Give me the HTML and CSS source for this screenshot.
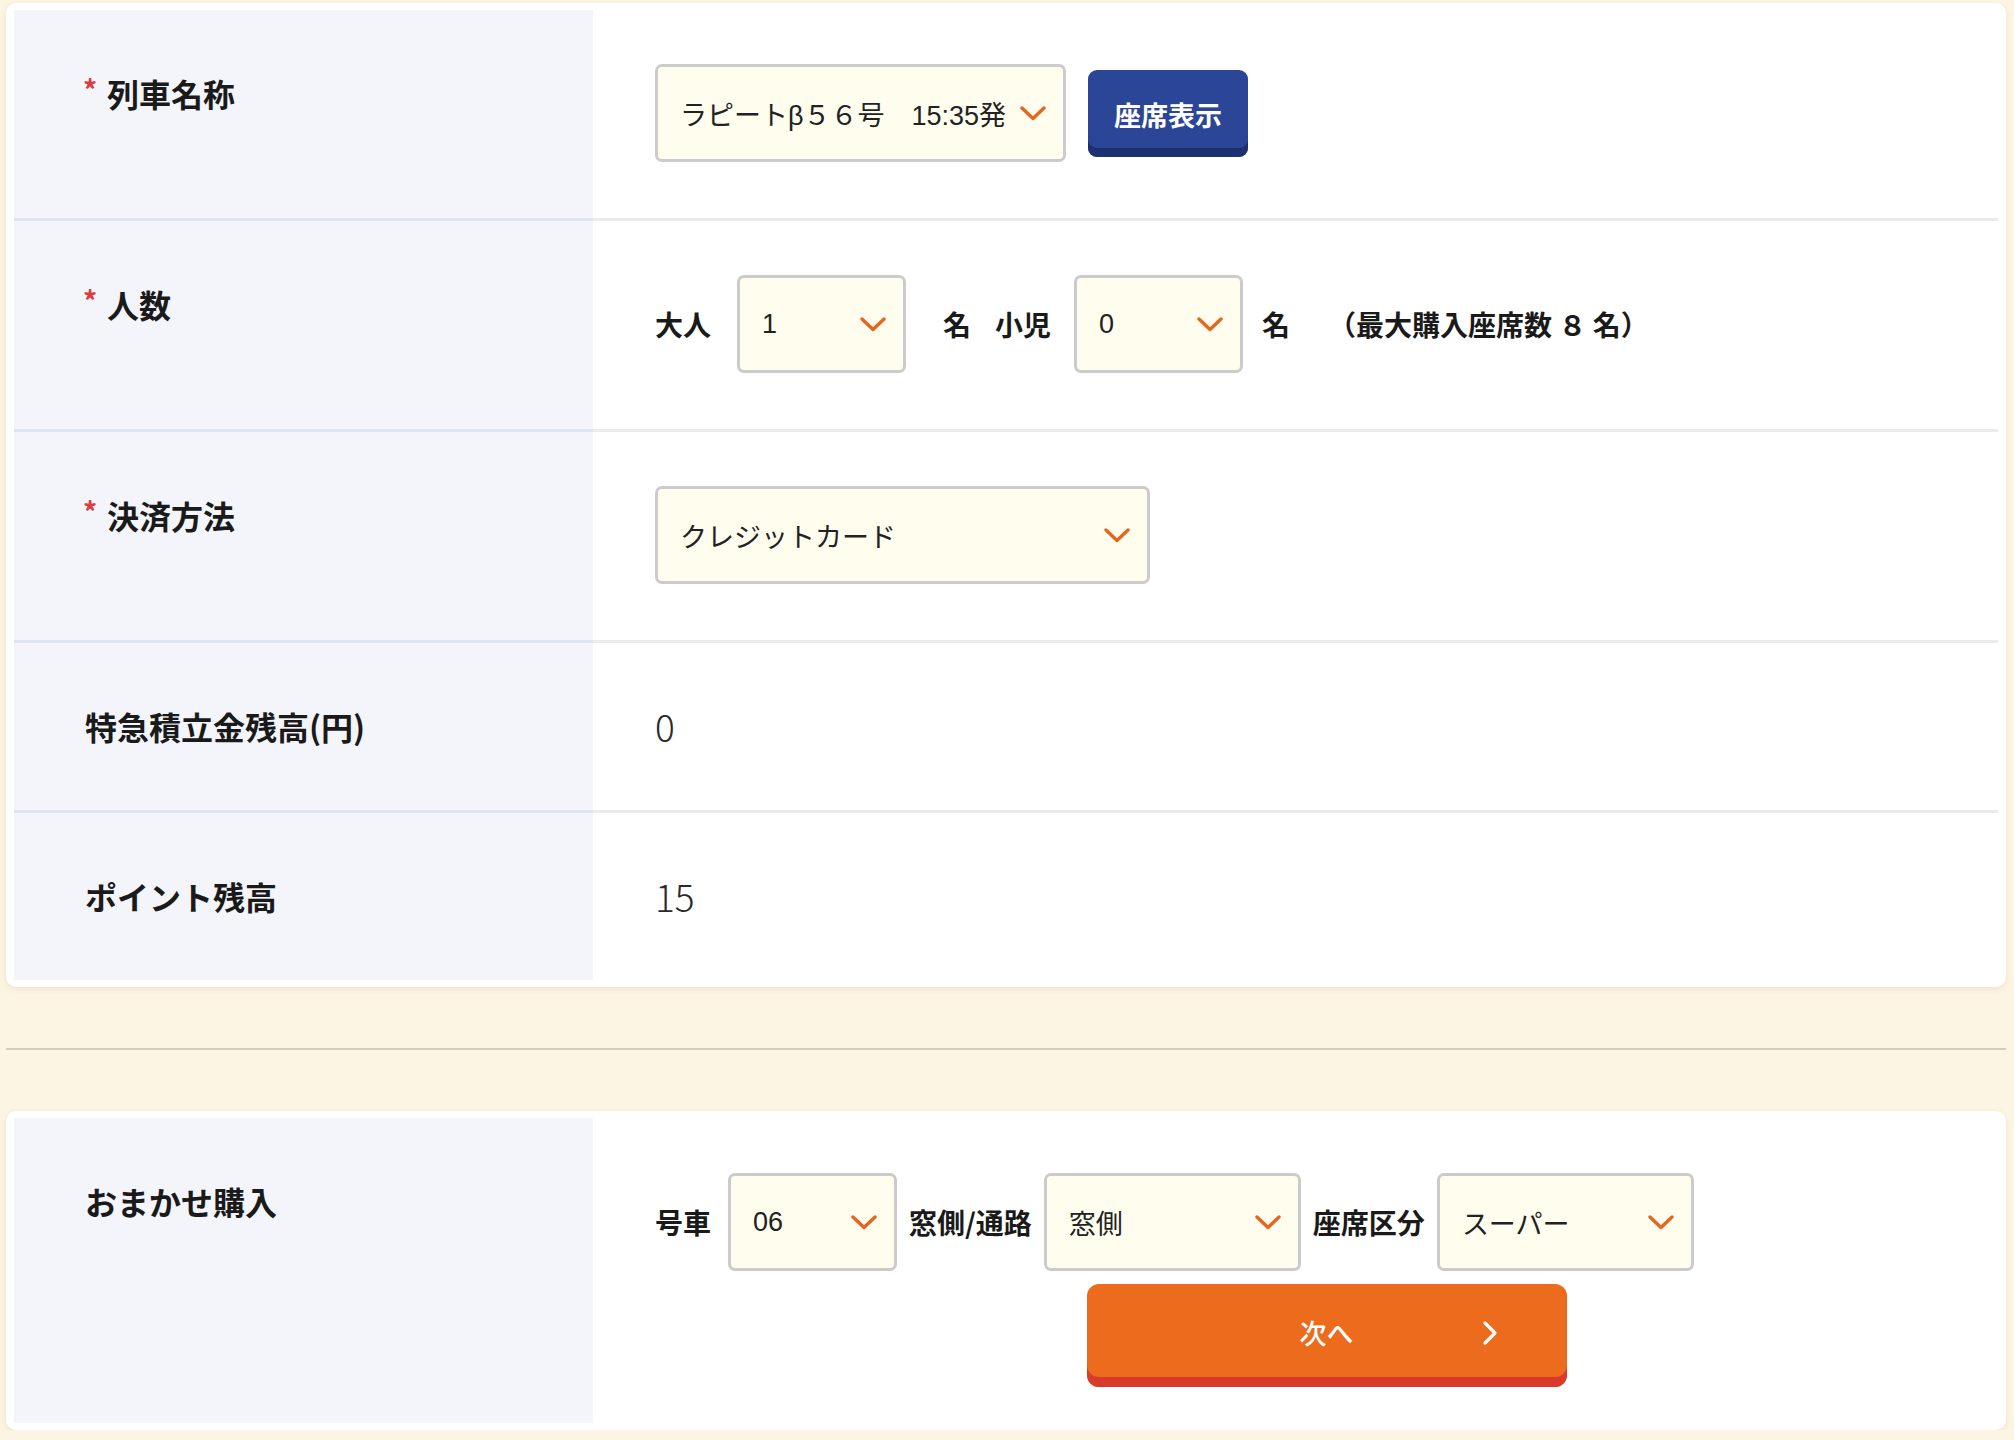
FILE: index.html
```html
<!DOCTYPE html>
<html lang="ja">
<head>
<meta charset="utf-8">
<title>予約</title>
<link rel="stylesheet" href="styles.css">
</head>
<body>
<main class="page">
  <section class="card">
    <div class="row tall">
      <div class="label"><span class="req">*</span>列車名称</div>
      <div class="value">
        <div class="select w-train"><span class="sel-text">ラピートβ５６号　15:35発</span><svg class="chev" width="26" height="15" viewBox="0 0 26 15"><polyline points="2,2 13,12.5 24,2" fill="none" stroke="#e5671f" stroke-width="3.4" stroke-linecap="round" stroke-linejoin="round"/></svg></div>
        <button class="btn-seat">座席表示</button>
      </div>
    </div>
    <div class="row tall">
      <div class="label"><span class="req">*</span>人数</div>
      <div class="value">
        <span class="inl adult">大人</span>
        <div class="select w-num"><span class="sel-text">1</span><svg class="chev" width="26" height="15" viewBox="0 0 26 15"><polyline points="2,2 13,12.5 24,2" fill="none" stroke="#e5671f" stroke-width="3.4" stroke-linecap="round" stroke-linejoin="round"/></svg></div>
        <span class="inl unit1">名</span>
        <span class="inl child">小児</span>
        <div class="select w-num"><span class="sel-text">0</span><svg class="chev" width="26" height="15" viewBox="0 0 26 15"><polyline points="2,2 13,12.5 24,2" fill="none" stroke="#e5671f" stroke-width="3.4" stroke-linecap="round" stroke-linejoin="round"/></svg></div>
        <span class="inl unit2">名</span>
        <span class="inl note">（最大購入座席数 ８ 名）</span>
      </div>
    </div>
    <div class="row tall">
      <div class="label"><span class="req">*</span>決済方法</div>
      <div class="value">
        <div class="select w-pay"><span class="sel-text">クレジットカード</span><svg class="chev" width="26" height="15" viewBox="0 0 26 15"><polyline points="2,2 13,12.5 24,2" fill="none" stroke="#e5671f" stroke-width="3.4" stroke-linecap="round" stroke-linejoin="round"/></svg></div>
      </div>
    </div>
    <div class="row">
      <div class="label">特急積立金残高(円)</div>
      <div class="value"><span class="num">0</span></div>
    </div>
    <div class="row">
      <div class="label">ポイント残高</div>
      <div class="value"><span class="num">15</span></div>
    </div>
  </section>

  <hr class="divider">

  <section class="card">
    <div class="row">
      <div class="label">おまかせ購入</div>
      <div class="value stack">
        <div class="opt-row">
          <span class="inl car">号車</span>
          <div class="select w-num"><span class="sel-text">06</span><svg class="chev" width="26" height="15" viewBox="0 0 26 15"><polyline points="2,2 13,12.5 24,2" fill="none" stroke="#e5671f" stroke-width="3.4" stroke-linecap="round" stroke-linejoin="round"/></svg></div>
          <span class="inl">窓側/通路</span>
          <div class="select w-mid"><span class="sel-text">窓側</span><svg class="chev" width="26" height="15" viewBox="0 0 26 15"><polyline points="2,2 13,12.5 24,2" fill="none" stroke="#e5671f" stroke-width="3.4" stroke-linecap="round" stroke-linejoin="round"/></svg></div>
          <span class="inl">座席区分</span>
          <div class="select w-mid"><span class="sel-text">スーパー</span><svg class="chev" width="26" height="15" viewBox="0 0 26 15"><polyline points="2,2 13,12.5 24,2" fill="none" stroke="#e5671f" stroke-width="3.4" stroke-linecap="round" stroke-linejoin="round"/></svg></div>
        </div>
        <button class="btn-next"><span class="next-txt">次へ</span><svg class="next-arrow" width="16" height="26" viewBox="0 0 16 26"><polyline points="3,3 13,13 3,23" fill="none" stroke="#ffffff" stroke-width="3.2" stroke-linecap="round" stroke-linejoin="round"/></svg></button>
      </div>
    </div>
  </section>
</main>
</body>
</html>
```

FILE: styles.css
```css
* { box-sizing: border-box; }
html, body { margin: 0; padding: 0; }
body {
  background: #fdf5e3;
  font-family: "Noto Sans CJK JP", "Noto Sans", sans-serif;
  color: #1c1c1c;
}
.page { padding: 3px 8px 0 6px; }

.card {
  background: #ffffff;
  border-radius: 10px;
  padding: 7px 8px;
  box-shadow: 0 2px 6px rgba(170, 140, 80, 0.18);
}

.row {
  display: grid;
  grid-template-columns: 579px 1fr;
}
.row:not(:last-child) .label { border-bottom: 3px solid #dfe4f4; }
.row:not(:last-child) .value { border-bottom: 3px solid #ebebeb; }

.label {
  background: #f4f5fa;
  padding: 62px 20px 63px 71px;
  font-size: 32px;
  font-weight: 700;
  line-height: 42px;
  color: #1a1a1a;
  white-space: nowrap;
}
.req {
  display: inline-block;
  width: 24px;
  margin-left: -2px;
  margin-top: 3px;
  vertical-align: top;
  color: #e03b3b;
  font-size: 28px;
  line-height: 28px;
  font-weight: 700;
}

.value {
  display: flex;
  align-items: center;
  padding: 54px 0 56px 62px;
}
.value.stack {
  flex-direction: column;
  align-items: stretch;
  padding: 55px 0 36px 62px;
}

.select {
  display: flex;
  align-items: center;
  height: 98px;
  flex: none;
  background: #fefdee;
  border: 3px solid #cbcbcb;
  border-radius: 7px;
  padding: 0 17px 0 22px;
  font-family: "Liberation Sans", "Noto Sans CJK JP", sans-serif;
  font-size: 27px;
  color: #222;
  white-space: nowrap;
}
.select .chev { margin-left: auto; flex: none; }
.w-train { width: 411px; }
.w-num { width: 169px; }
.w-pay { width: 495px; }
.w-mid { width: 257px; }

.btn-seat {
  margin-left: 22px;
  width: 160px;
  height: 87px;
  border: none;
  border-radius: 9px;
  background: #2b4597;
  box-shadow: inset 0 -9px 0 #1d306f;
  color: #ffffff;
  font-family: "Noto Sans CJK JP", sans-serif;
  font-size: 27px;
  font-weight: 700;
  padding: 3px 0 0;
}

.inl {
  font-size: 28px;
  font-weight: 700;
  line-height: 40px;
  white-space: nowrap;
  color: #1a1a1a;
}
.adult { margin-right: 26px; }
.unit1 { margin-left: 37px; margin-right: 24px; }
.child { margin-right: 23px; }
.unit2 { margin-left: 19px; }
.note { margin-left: 38px; }

.num {
  font-size: 37px;
  font-weight: 300;
  line-height: 44px;
  color: #2a2a2a;
}

.divider {
  border: none;
  height: 2px;
  background: #d3ccc0;
  margin: 61px 0;
}

.opt-row {
  display: flex;
  align-items: center;
  gap: 12px;
}
.car { margin-right: 5px; }

.btn-next {
  align-self: center;
  margin-top: 13px;
  width: 480px;
  height: 103px;
  border: none;
  border-radius: 12px;
  background: #ec6b1c;
  box-shadow: inset 0 -10px 0 #da3a2b;
  color: #ffffff;
  font-family: "Noto Sans CJK JP", sans-serif;
  font-size: 27px;
  font-weight: 500;
  display: grid;
  grid-template-columns: 1fr auto 1fr;
  align-items: center;
  padding: 0 0 6px;
}
.next-txt { grid-column: 2; }
.next-arrow { grid-column: 3; justify-self: end; margin-right: 69px; }
```
